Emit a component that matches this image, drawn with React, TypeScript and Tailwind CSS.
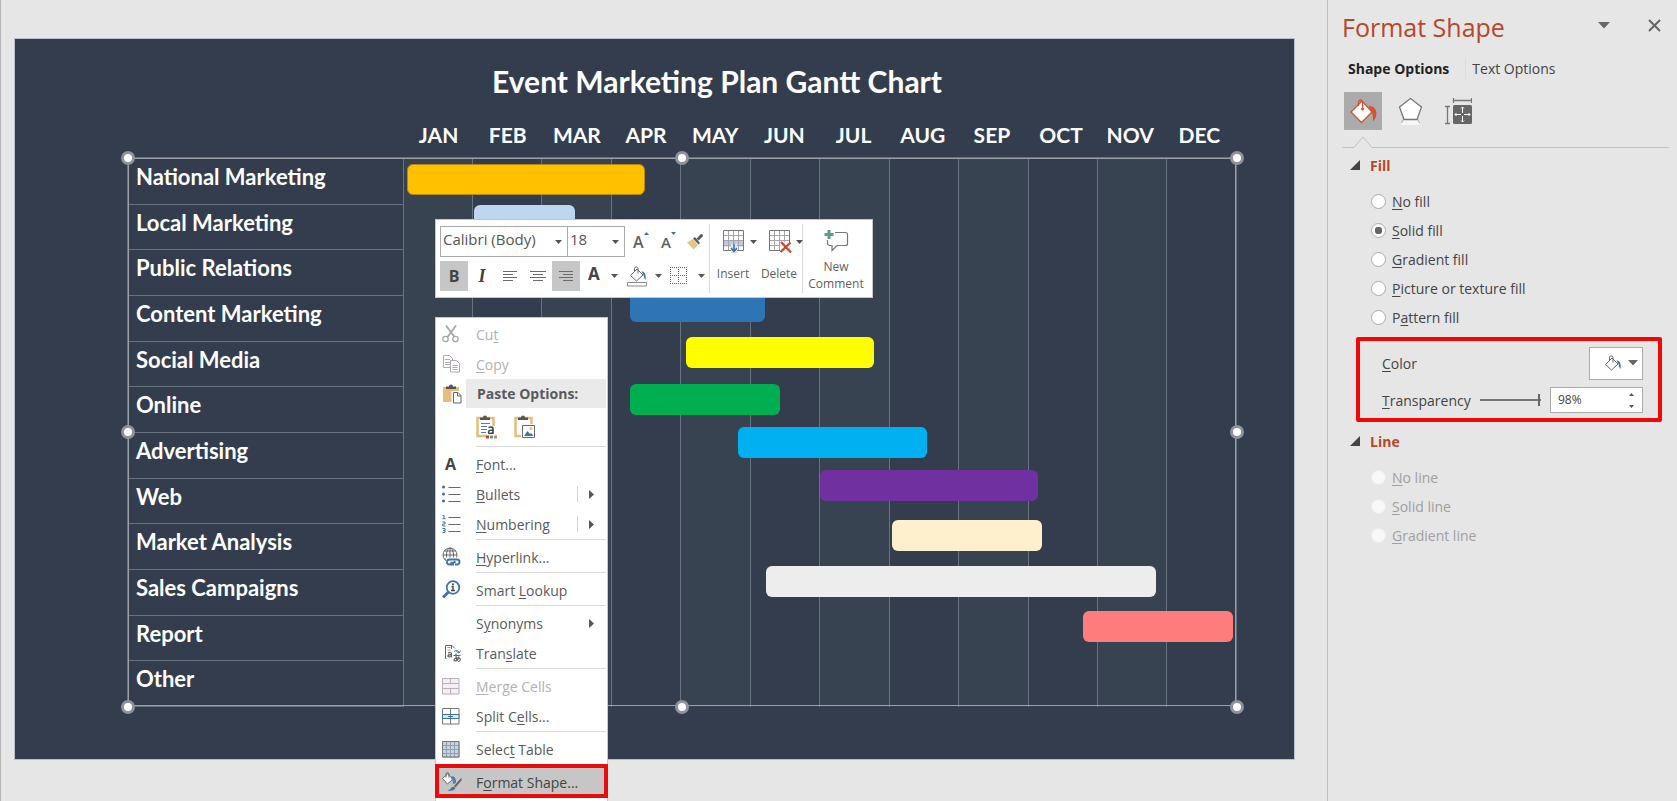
import type { ReactNode } from "react";
import clsx from "clsx";

const months = ["JAN", "FEB", "MAR", "APR", "MAY", "JUN", "JUL", "AUG", "SEP", "OCT", "NOV", "DEC"];

const tasks = [
  "National Marketing",
  "Local Marketing",
  "Public Relations",
  "Content Marketing",
  "Social Media",
  "Online",
  "Advertising",
  "Web",
  "Market Analysis",
  "Sales Campaigns",
  "Report",
  "Other",
];

// start and span are in months, top is in px from the top of the chart
const bars = [
  { start: 0.07, span: 3.42, top: 7, color: "bg-[#ffc000] border border-[#b58a0a]" },
  { start: 1.03, span: 1.45, top: 48, color: "bg-[#bdd7ee]" },
  { start: 3.27, span: 1.95, top: 134, color: "bg-[#2e75b6]" },
  { start: 4.08, span: 2.7, top: 180, color: "bg-[#ffff00]" },
  { start: 3.27, span: 2.16, top: 227, color: "bg-[#00b050]" },
  { start: 4.83, span: 2.72, top: 270, color: "bg-[#00b0f0]" },
  { start: 6.01, span: 3.13, top: 313, color: "bg-[#7030a0]" },
  { start: 7.04, span: 2.16, top: 363, color: "bg-[#fff0cd]" },
  { start: 5.23, span: 5.61, top: 409, color: "bg-[#ededed]" },
  { start: 9.79, span: 2.15, top: 454, color: "bg-[#ff7c7c]" },
];

const handles = [
  "left-px top-px",
  "left-1/2 top-px",
  "left-full top-px",
  "left-px top-1/2",
  "left-full top-1/2",
  "left-px top-full",
  "left-1/2 top-full",
  "left-full top-full",
];

// Underlines the access key of a caption
function Caption({ text, at }: { text: string; at?: number }) {
  if (at === undefined) return <span>{text}</span>;
  return (
    <span>
      {text.slice(0, at)}
      <u className="underline-offset-2">{text[at]}</u>
      {text.slice(at + 1)}
    </span>
  );
}

function Caret() {
  return (
    <svg width="7" height="4" viewBox="0 0 7 4" fill="#555" className="shrink-0">
      <path d="M0 0h7L3.5 4z" />
    </svg>
  );
}

function Slide() {
  return (
    <section className="border border-[#b9c0cc] bg-[#333d4e] pt-6 pb-[52px] pl-[112px] pr-[57px] font-[Lato,sans-serif] font-bold text-white">
      <h1 className="pl-[70px] text-center text-[30px] leading-9">Event Marketing Plan Gantt Chart</h1>
      <div className="grid grid-cols-12 pt-[22px] pr-[3px] pl-[277px] pb-2 text-center text-[21px] leading-7">
        {months.map((m) => (
          <span key={m}>{m}</span>
        ))}
      </div>
      <div className="relative">
        <table className="h-[550px] w-full table-fixed border-collapse border-t-2 border-[#697281] outline outline-1 -outline-offset-2 outline-[#9b9fa6]">
          <colgroup>
            <col className="w-[275px]" />
            {months.map((m) => (
              <col key={m} />
            ))}
          </colgroup>
          <tbody>
            {tasks.map((task, i) => (
              <tr key={task}>
                <th
                  scope="row"
                  className="border-b border-l-2 border-[#697281] pl-[7px] pt-1 text-left align-top text-[22px] leading-7"
                >
                  {task}
                </th>
                {i === 0 &&
                  months.map((m) => (
                    <td key={m} rowSpan={12} className="border-x border-[#697281] even:bg-[#384352]" />
                  ))}
              </tr>
            ))}
          </tbody>
        </table>
        <div className="absolute inset-y-0 right-0 left-[275px]">
          {bars.map((b) => (
            <div
              key={b.top}
              className={clsx("absolute h-[31px] rounded-md", b.color)}
              style={{
                left: `${(b.start / 12) * 100}%`,
                width: `${(b.span / 12) * 100}%`,
                top: b.top,
              }}
            />
          ))}
        </div>
        {handles.map((h) => (
          <span
            key={h}
            className={clsx(
              "absolute size-[14px] -translate-x-1/2 -translate-y-1/2 rounded-full border-[3px] border-[#8f9399] bg-white",
              h,
            )}
          />
        ))}
      </div>
    </section>
  );
}

function AlignIcon({ kind }: { kind: "left" | "center" | "right" }) {
  const d = {
    left: "M1 1.5h14M1 4.5h10M1 7.5h14M1 10.5h10",
    center: "M0 1.5h16M3 4.5h10M0 7.5h16M3 10.5h10",
    right: "M1 1.5h14M5 4.5h10M1 7.5h14M5 10.5h10",
  }[kind];
  return (
    <svg width="16" height="12" viewBox="0 0 16 12" stroke="#6a6a6a" fill="none">
      <path d={d} />
    </svg>
  );
}

function Bucket({ bar }: { bar?: boolean }) {
  return (
    <svg width="20" height={bar ? 21 : 16} viewBox={bar ? "0 0 20 21" : "0 0 20 16"} fill="none" stroke="#666">
      <path d="M3.5 9.5 10 3l6 6-6.500 6z" fill="#fff" />
      <path d="M7.500 6V2.500a1.500 1.500 0 0 1 1.500-1.500h.5a1.500 1.500 0 0 1 1.500 1.500V7.500" />
      <path d="M14.500 5.500c3 0 5 2.500 4 8.500-1-1-1.500-2.500-2-5z" fill="#3f74a5" stroke="none" />
      {bar && <path d="M.5 16.500h19v3.500H.5z" fill="#fff" stroke="#8a8a8a" />}
    </svg>
  );
}

function BrushIcon() {
  return (
    <svg width="18" height="17" viewBox="0 0 18 17">
      <path d="M1 9.500 7 6l5 6-4.500 4.500z" fill="#e8c384" />
      <path d="m7 5.500 2-1.500 5 6-1.500 1.500z" fill="#5b5b5b" />
      <path d="m10.500 5.500 4-4 2 2-4 4z" fill="#5b5b5b" />
      <circle cx="15.500" cy="2.500" r="1.500" fill="#5b5b5b" />
    </svg>
  );
}

function GridIcon({ remove }: { remove?: boolean }) {
  return (
    <svg width="23" height="23" viewBox="0 0 23 23" fill="none">
      {!remove && <path d="M.5 10.500h20v6H.5z" fill="#b9cbe0" />}
      <path d="M5.500 1v20M10.500 1v20M15.500 1v20M1 5.500h20M1 10.500h20M1 15.500h20" stroke="#a9a2ac" />
      <path d="M.5.5h20v20H.5z" stroke="#777" />
      {remove ? (
        <g>
          <path d="M11 12h12v11H11z" fill="#fff" opacity=".8" />
          <path d="m12 12 10 10.500M21.500 12.500 11.500 22" stroke="#c4492d" strokeWidth="2.200" />
        </g>
      ) : (
        <g>
          <path d="M8 14h6v9H8z" fill="#dfe8f2" />
          <path d="M11 14v7M8 18l3 3.500 3-3.500" stroke="#3a6ea5" strokeWidth="1.500" />
        </g>
      )}
    </svg>
  );
}

function MiniToolbar() {
  return (
    <div className="absolute top-[219px] left-[435px] flex h-[79px] w-[438px] border border-[#c6c6c6] bg-white text-[12px] text-[#5f5f5f]">
      <div className="flex w-[273px] flex-col gap-1 pt-1.5 pl-1">
        <div className="flex h-[31px] items-center">
          <div className="relative h-full w-[128px]">
            <select
              aria-label="Font"
              className="h-full w-full appearance-none border border-[#ababab] px-0.5 pb-1 text-[15px] text-[#555]"
            >
              <option>Calibri (Body)</option>
            </select>
            <span className="pointer-events-none absolute top-3.5 right-1.5">
              <Caret />
            </span>
          </div>
          <div className="relative -ml-px h-full w-[58px]">
            <select
              aria-label="Font size"
              className="h-full w-full appearance-none border border-[#ababab] px-0.5 pb-1 text-[15px] text-[#555]"
            >
              <option>18</option>
            </select>
            <span className="pointer-events-none absolute top-3.5 right-1.5">
              <Caret />
            </span>
          </div>
          <button aria-label="Increase font size" className="ml-2 flex w-[18px] items-start text-[16px] leading-5 font-semibold">
            A
            <svg width="5" height="3" viewBox="0 0 5 3" fill="#3f74a5" className="shrink-0">
              <path d="M0 3h5L2.500 0z" />
            </svg>
          </button>
          <button aria-label="Decrease font size" className="ml-2.5 flex w-[18px] items-start text-[15px] leading-5 font-semibold">
            A
            <svg width="5" height="3" viewBox="0 0 5 3" fill="#3f74a5" className="shrink-0">
              <path d="M0 0h5L2.500 3z" />
            </svg>
          </button>
          <button aria-label="Format painter" className="ml-[7px]">
            <BrushIcon />
          </button>
        </div>
        <div className="flex h-[30px] items-center">
          <button className="h-full w-7 bg-[#c6c6c6] text-[16px] font-bold text-[#444]">B</button>
          <button className="h-full w-7 font-['Liberation_Serif',serif] text-[18px] font-bold text-[#444] italic">I</button>
          <button aria-label="Align left" className="flex h-full w-7 items-center justify-center">
            <AlignIcon kind="left" />
          </button>
          <button aria-label="Center" className="flex h-full w-7 items-center justify-center">
            <AlignIcon kind="center" />
          </button>
          <button aria-label="Align right" className="flex h-full w-7 items-center justify-center bg-[#c6c6c6]">
            <AlignIcon kind="right" />
          </button>
          <button aria-label="Font color" className="flex h-full w-[41px] items-center justify-between pr-[3px] pl-2">
            <span className="pb-1 text-[17px] font-bold text-[#444]">A</span>
            <Caret />
          </button>
          <button aria-label="Shape fill" className="flex h-full w-[41px] items-center justify-between pl-1.5">
            <Bucket bar />
            <Caret />
          </button>
          <button aria-label="Borders" className="ml-2 flex h-full items-center gap-2.5">
            <svg width="18" height="18" viewBox="0 0 18 18" fill="none" stroke="#666" strokeDasharray="1 1">
              <path d="M.5 0v18M8.500 0v18M16.500 0v18M0 .5h17M0 8.500h17M0 16.500h17" />
            </svg>
            <Caret />
          </button>
        </div>
      </div>
      <div className="my-1 flex w-[94px] border-x border-[#dcdcdc]">
        <button className="flex w-[46px] flex-col items-center gap-3">
          <span className="mt-1.5 ml-3.5 flex items-center gap-1">
            <GridIcon />
            <Caret />
          </span>
          <span>Insert</span>
        </button>
        <button className="flex w-[46px] flex-col items-center gap-3">
          <span className="mt-1.5 ml-3.5 flex items-center gap-1">
            <GridIcon remove />
            <Caret />
          </span>
          <span>Delete</span>
        </button>
      </div>
      <button className="flex w-[66px] flex-col items-center pt-[9px] leading-[17px]">
        <svg width="25" height="23" viewBox="0 0 25 23" fill="none" className="mb-1.5 shrink-0">
          <path d="M11 3.500h10.500a2 2 0 0 1 2 2v9a2 2 0 0 1-2 2H13l-5 5v-5H5.500a2 2 0 0 1-2-2V11" stroke="#777" strokeWidth="1.200" />
          <path d="M5 1v9M.5 5.500h9" stroke="#5c9c87" strokeWidth="3" />
        </svg>
        <span>New</span>
        <span>Comment</span>
      </button>
    </div>
  );
}

const icons: Record<string, ReactNode> = {
  cut: (
    <g stroke="#a8a4a8" fill="none" strokeWidth="1.300">
      <path d="M4 1.500 12.500 13M14 1.500 5.500 13" strokeWidth="1.800" />
      <circle cx="3.500" cy="15" r="2.700" />
      <circle cx="13.500" cy="15" r="2.700" />
    </g>
  ),
  copy: (
    <g stroke="#b0a8b0" fill="#fff">
      <path d="M1.500 1.500h6l3 3v9h-9z" />
      <path d="M3 5.500h5M3 8.500h5M3 10.500h5" />
      <path d="M8.500 6.500h6l3 3v8.500h-9z" />
      <path d="M10.500 11.500h5M10.500 13.500h5M10.500 15.500h5" />
    </g>
  ),
  paste: (
    <g>
      <path d="M1 3h16v15H1z" fill="#e6be7c" />
      <path d="M4 2.500h3a2 2 0 0 1 4 0h3V5H4z" fill="#555" />
      <path d="M9.500 7h8v12h-8z" fill="#fff" />
      <path d="M11.500 8.500h4.500l3 3v7.500h-7.500zM15.500 8.500v3.500h3.500" fill="#fff" stroke="#666" />
    </g>
  ),
  bullets: (
    <g>
      <path d="M6.500 3.500h12M6.500 10.500h12M6.500 17.500h12" stroke="#666" />
      <circle cx="1.500" cy="3" r="1.500" fill="#3f6c9c" />
      <circle cx="1.500" cy="10" r="1.500" fill="#3f6c9c" />
      <circle cx="1.500" cy="17" r="1.500" fill="#3f6c9c" />
    </g>
  ),
  numbering: (
    <g>
      <path d="M6.500 3.500h12M6.500 10.500h12M6.500 17.500h12" stroke="#666" />
      <path d="M.5 1.500H2V4.500M.5 4.700h3M.5 8H3v2H.8v2h2.700M.5 14.500H3v4H.5M1 16.500h2" stroke="#3f6c9c" fill="none" />
    </g>
  ),
  link: (
    <g fill="none" stroke="#666">
      <circle cx="8" cy="8" r="7" />
      <path d="M1 8h14M2.500 4h11M2.500 12h6M8 1v14" />
      <ellipse cx="8" cy="8" rx="3.500" ry="7" />
      <path d="M4 10.500h15v9H4z" fill="#fff" stroke="none" />
      <g stroke="#3f74a5" strokeWidth="1.900">
        <path d="M12 17.500H7.500a2.500 2.500 0 0 1 0-5H11M10.500 12.500H15a2.500 2.500 0 0 1 0 5h-2M8.500 15.500q3 1 5-1" />
      </g>
    </g>
  ),
  lookup: (
    <g fill="none" stroke="#3f74a5">
      <circle cx="11" cy="7.500" r="6.300" strokeWidth="1.800" />
      <path d="M6.500 12 1 17.500" strokeWidth="3" />
      <path d="M9.500 6.500H11V10.500M9 10.500h4" stroke="#444" strokeWidth="1.400" />
      <circle cx="11" cy="4.300" r="1" fill="#444" stroke="none" />
    </g>
  ),
  translate: (
    <g fill="none" stroke="#666">
      <path d="M4.500 15.500h-1v-13h6.500l3 3M9.500 2.500v3.500" />
      <path d="M5.500 4.500h3M5.500 7h3" stroke="#e08b3c" />
      <path d="M6 10q3.500-1.500 3.500 1v3.500M9.500 11.500q-3.500 0-3.500 1.500t3.500.5" strokeWidth="1.300" />
      <path d="M12 8.500q4-2.500 5 1M14.500 8.500l2.500 1.500 1.500-2.500" stroke="#3f74a5" />
      <path d="M11.500 12.500h7M14 10.500q-.5 5 1.500 7.500M17 13.500q-1 4-4 4.500-2-.5 0-2.500 3-1.500 5 0 1 2.500-2 3" strokeWidth="1.200" />
    </g>
  ),
  merge: (
    <g fill="#f5eef5" stroke="#b9b0b9">
      <path d="M.5 2.500h16.500v15.500H.5zM.5 7.500h16.500M.5 12.500h16.500M8.500 2.500v5M8.500 12.500v5.500" />
    </g>
  ),
  split: (
    <g fill="#fff" stroke="#777">
      <path d="M.5 2.500h16.500v15.500H.5zM8.500 2.500v15.500" />
      <path d="M.5 8.500h16.500v4H.5zM6 10.500h5M8.500 8.500v4" stroke="#3f74a5" fill="#dbe6f2" />
    </g>
  ),
  select: (
    <g fill="#c6d3e0" stroke="#8fa0b2">
      <path d="M.5 2.500h16.500v15.500H.5z" />
      <path d="M4.500 2.500V18M8.500 2.500V18M12.500 2.500V18M.5 6.500H17M.5 10.500H17M.5 14.500H17" />
      <path d="M.5 2.500h16.500v15.500H.5z" fill="none" stroke="#777" />
    </g>
  ),
  format: (
    <g>
      <path d="M.5 6.500 5.500 2l5.500 5L5.500 12z" fill="#fff" stroke="#666" />
      <path d="M4 5.500V1.500q1.500-2 3 0v4" fill="none" stroke="#666" />
      <path d="M9.500 4q5 0 4.500 7l-3 1q0-4-2-5.500z" fill="#4f81b0" />
      <path d="M19.500 5.500 12 14l1.500 1.500 6-7z" fill="#666" />
      <path d="M11.500 14.500q-2 0-3 2.500l-3 1.500q6 1 8-2z" fill="#3f74a5" />
    </g>
  ),
};

type ItemProps = {
  text: string;
  at?: number;
  icon?: string;
  letter?: boolean;
  disabled?: boolean;
  arrow?: boolean;
  split?: boolean;
  active?: boolean;
};

function MenuItem({ text, at, icon, letter, disabled, arrow, split, active }: ItemProps) {
  return (
    <button
      disabled={disabled}
      className={clsx(
        "flex items-center text-left text-[14px] disabled:text-[#b1b1b1]",
        active ? "-mx-px h-[34px] border-4 border-[#e80c0c] bg-[#c6c6c6] pt-0.5 pl-[3px] text-[#444]" : "h-[30px] w-full pl-1.5",
      )}
    >
      <span className="flex w-[34px] shrink-0 items-center">
        {icon && (
          <svg width="20" height="20" viewBox="0 0 20 20">
            {icons[icon]}
          </svg>
        )}
        {letter && <span className="pl-[3px] text-[16px] font-bold text-[#444]">A</span>}
      </span>
      <Caption text={text} at={at} />
      {arrow && (
        <span className={clsx("mr-[13px] ml-auto flex h-4 items-center pl-[11px]", split && "border-l border-[#d5d5d5]")}>
          <svg width="5" height="9" viewBox="0 0 5 9" fill="#555">
            <path d="M0 0v9l5-4.500z" />
          </svg>
        </span>
      )}
    </button>
  );
}

function Rule() {
  return <div className="mr-px mb-0.5 ml-10 h-px bg-[#dadada]" />;
}

function ContextMenu() {
  return (
    <div className="absolute top-[317px] bottom-0 left-[435px] flex w-[173px] flex-col border-x border-t border-[#c6c6c6] bg-white pt-px text-[#5a5a5a]">
      <MenuItem text="Cut" at={2} icon="cut" disabled />
      <MenuItem text="Copy" at={0} icon="copy" disabled />
      <div className="flex h-[29px] items-center pl-1.5">
        <svg width="20" height="20" viewBox="0 0 20 20" className="mr-1 shrink-0">
          {icons.paste}
        </svg>
        <span className="mr-px flex h-full flex-1 items-center bg-[#eaeaea] pl-[11px] text-[14px] font-bold">
          Paste Options:
        </span>
      </div>
      <div className="flex h-[38px] items-center gap-4 pl-10">
        <button aria-label="Use destination theme">
          <svg width="22" height="24" viewBox="0 0 22 24">
            <path d="M1.500 3h16v18h-16z" fill="#fff" stroke="#e6be7c" strokeWidth="2.500" />
            <path d="M4 2.500h3a2 2 0 0 1 4 0h3V5H4z" fill="#555" />
            <path d="M5 8.500h9M5 11.500h6M5 14.500h6M5 17.500h5" stroke="#4d7f9e" />
            <path d="M11 11h11v13H11z" fill="#fff" />
            <path d="M12.500 12.500q4.500-1.500 4.500 1.500v5M17 15q-4.500 0-4.500 2.200t4.500.5" fill="none" stroke="#444" strokeWidth="1.600" />
            <path d="M10 20.500h3v3h-3z" fill="#b7472a" />
            <path d="M14 20.500h3v3h-3z" fill="#5c9c87" />
            <path d="M18 20.500h3v3h-3z" fill="#c98a4b" />
          </svg>
        </button>
        <button aria-label="Picture">
          <svg width="22" height="24" viewBox="0 0 22 24">
            <path d="M1.500 3h16v18h-16z" fill="#fff" stroke="#e6be7c" strokeWidth="2.500" />
            <path d="M4 2.500h3a2 2 0 0 1 4 0h3V5H4z" fill="#555" />
            <path d="M7 9h15v15H7z" fill="#fff" />
            <path d="M8.500 10.500h12v12h-12z" fill="#fff" stroke="#666" />
            <path d="m10 21 3.500-5 2.500 3 1-1 2.500 3z" fill="#3f74a5" />
            <circle cx="17" cy="13.500" r="1.500" fill="#e6be7c" />
          </svg>
        </button>
      </div>
      <Rule />
      <MenuItem text="Font..." at={0} letter />
      <MenuItem text="Bullets" at={0} icon="bullets" arrow split />
      <MenuItem text="Numbering" at={0} icon="numbering" arrow split />
      <Rule />
      <MenuItem text="Hyperlink..." at={0} icon="link" />
      <Rule />
      <MenuItem text="Smart Lookup" at={6} icon="lookup" />
      <Rule />
      <MenuItem text="Synonyms" at={1} arrow />
      <MenuItem text="Translate" at={4} icon="translate" />
      <Rule />
      <MenuItem text="Merge Cells" at={0} icon="merge" disabled />
      <MenuItem text="Split Cells..." at={7} icon="split" />
      <Rule />
      <MenuItem text="Select Table" at={5} icon="select" />
      <MenuItem text="Format Shape..." at={1} icon="format" active />
    </div>
  );
}

type RadioProps = { group: string; text: string; at: number; checked?: boolean; disabled?: boolean };

function Radio({ group, text, at, checked, disabled }: RadioProps) {
  return (
    <label className={clsx("flex h-[29px] items-center gap-1.5", disabled && "text-[#a0a0a0]")}>
      <input
        type="radio"
        name={group}
        defaultChecked={checked}
        disabled={disabled}
        className="size-[15px] appearance-none rounded-full border border-[#ababab] bg-white checked:bg-[radial-gradient(#666_3.5px,white_4px)] disabled:border-[#ededed] disabled:bg-[#f8f8f8]"
      />
      <Caption text={text} at={at} />
    </label>
  );
}

function SectionTitle({ children }: { children: ReactNode }) {
  return (
    <h3 className="flex h-6 items-center gap-2.5 pl-2 font-bold text-[#b7472a]">
      <svg width="10" height="10" viewBox="0 0 10 10" fill="#444">
        <path d="M10 0v10H0z" />
      </svg>
      {children}
    </h3>
  );
}

function FormatPane() {
  return (
    <aside className="w-[350px] shrink-0 border-l border-[#c0c0c0] pt-2 pr-2 pl-3.5 text-[14px] text-[#444]">
      <header className="flex items-center">
        <h2 className="text-[25px] leading-[38px] text-[#b7472a]">Format Shape</h2>
        <button aria-label="Pane options" className="ml-auto pb-1">
          <svg width="12" height="7" viewBox="0 0 12 7" fill="#666">
            <path d="M0 0h12L6 6.500z" />
          </svg>
        </button>
        <button aria-label="Close" className="mr-2 ml-[38px] pb-1">
          <svg width="13" height="13" viewBox="0 0 13 13" stroke="#666" strokeWidth="2">
            <path d="m1 1 11 11M12 1 1 12" />
          </svg>
        </button>
      </header>

      <div className="mt-2.5 flex h-6 items-center pl-1.5">
        <button className="pr-4 font-bold text-[#222]">Shape Options</button>
        <button className="border-l border-[#dcdcdc] pl-1.5">Text Options</button>
      </div>

      <div className="mt-3 flex h-[38px] items-center pl-0.5">
        <button aria-label="Fill and line" className="flex size-[38px] items-center justify-center bg-[#ababab]">
          <svg width="27" height="26" viewBox="0 0 27 26">
            <path d="M12 3 22 14 11.500 24.500 1 14z" fill="#fff" stroke="#d35230" strokeWidth="1.300" />
            <path d="M8.500 8V3.500q2-3 4 0V11" fill="none" stroke="#d35230" strokeWidth="1.300" />
            <circle cx="12.500" cy="11" r="1.500" fill="#d35230" />
            <path d="M18.500 7.500q8 1 8 8 0 4-3.500 8 .5-8-3-12z" fill="#d35230" />
          </svg>
        </button>
        <button aria-label="Effects" className="ml-4">
          <svg width="25" height="29" viewBox="0 0 25 29">
            <path d="M5 22h15l2 6H3z" fill="#f6f6f6" />
            <path d="m5.500 22-2 4M19.500 22l2 4" stroke="#aaa" />
            <path d="M12.500 1.500 23.500 10l-4.500 12.500H6L1.500 10z" fill="#fff" stroke="#777" strokeWidth="1.300" />
          </svg>
        </button>
        <button aria-label="Size and properties" className="ml-[22px]">
          <svg width="27" height="27" viewBox="0 0 27 27" fill="none">
            <path d="M9 2.500h17M8.500 0v5M26.500 0v5M2.500 9v17M0 8.500h5M0 25.500h5" stroke="#777" strokeWidth="1.300" />
            <rect x="8" y="7" width="19" height="19" rx="1.500" fill="#666" />
            <path
              d="M17.500 9v6M17.500 18v6M10 16.500h6M19 16.500h6M16 10.500l1.500-1.500 1.500 1.500M16 22.500l1.500 1.500 1.500-1.500M11.500 15 10 16.500l1.500 1.500M23.500 15l1.500 1.500-1.500 1.500"
              stroke="#fff"
            />
          </svg>
        </button>
      </div>

      <div className="mt-1.5 flex h-3 items-end">
        <span className="h-px w-3 bg-[#c3c3c3]" />
        <svg width="18" height="12" viewBox="0 0 18 12" fill="none" stroke="#c3c3c3">
          <path d="M0 11.500 9 1l9 10.500" />
        </svg>
        <span className="h-px flex-1 bg-[#c3c3c3]" />
      </div>

      <div className="pt-[5px]">
        <SectionTitle>Fill</SectionTitle>
      </div>
      <div className="pt-2.5 pl-[29px]">
        <Radio group="fill" text="No fill" at={0} />
        <Radio group="fill" text="Solid fill" at={0} checked />
        <Radio group="fill" text="Gradient fill" at={0} />
        <Radio group="fill" text="Picture or texture fill" at={0} />
        <Radio group="fill" text="Pattern fill" at={1} />
      </div>

      <div className="mt-[5px] mr-[7px] ml-3.5 flex flex-col gap-[7px] rounded-xs border-4 border-[#f00808] pt-1.5 pr-[15px] pb-[5px] pl-[22px]">
        <div className="flex h-[33px] items-center justify-between">
          <label htmlFor="color">
            <Caption text="Color" at={0} />
          </label>
          <button id="color" className="flex h-full w-[54px] items-center justify-end gap-1.5 border border-[#ababab] bg-white pr-1 pb-0.5">
            <Bucket />
            <svg width="10" height="6" viewBox="0 0 10 6" fill="#666">
              <path d="M0 0h10L5 5.500z" />
            </svg>
          </button>
        </div>
        <div className="flex items-center">
          <label htmlFor="transparency">
            <Caption text="Transparency" at={0} />
          </label>
          <input
            type="range"
            aria-label="Transparency slider"
            defaultValue={98}
            className="ml-auto h-3 w-[61px] appearance-none bg-[linear-gradient(#777,#777)] bg-[length:100%_2px] bg-center bg-no-repeat [&::-webkit-slider-thumb]:h-3 [&::-webkit-slider-thumb]:w-0.5 [&::-webkit-slider-thumb]:appearance-none [&::-webkit-slider-thumb]:bg-[#666]"
          />
          <div className="ml-[9px] flex h-[26px] w-[93px] items-center border border-[#ababab] bg-white pr-2 pl-[7px]">
            <input id="transparency" defaultValue="98%" className="w-full min-w-0 text-[12px]" />
            <svg width="5" height="15" viewBox="0 0 5 15" fill="#555" className="shrink-0">
              <path d="M0 3h5L2.500 0zM0 12h5l-2.500 3z" />
            </svg>
          </div>
        </div>
      </div>

      <div className="pt-[7px]">
        <SectionTitle>Line</SectionTitle>
      </div>
      <div className="pt-2.5 pl-[29px]">
        <Radio group="line" text="No line" at={0} disabled />
        <Radio group="line" text="Solid line" at={0} disabled />
        <Radio group="line" text="Gradient line" at={0} disabled />
      </div>
    </aside>
  );
}

export default function App() {
  return (
    <div className="relative flex min-h-screen overflow-hidden bg-[#e6e6e6] font-['Open_Sans',sans-serif]">
      <main className="min-w-0 flex-1 border-l border-[#b5b5b5] pt-[38px] pr-8 pl-[13px]">
        <Slide />
      </main>
      <FormatPane />
      <MiniToolbar />
      <ContextMenu />
    </div>
  );
}
